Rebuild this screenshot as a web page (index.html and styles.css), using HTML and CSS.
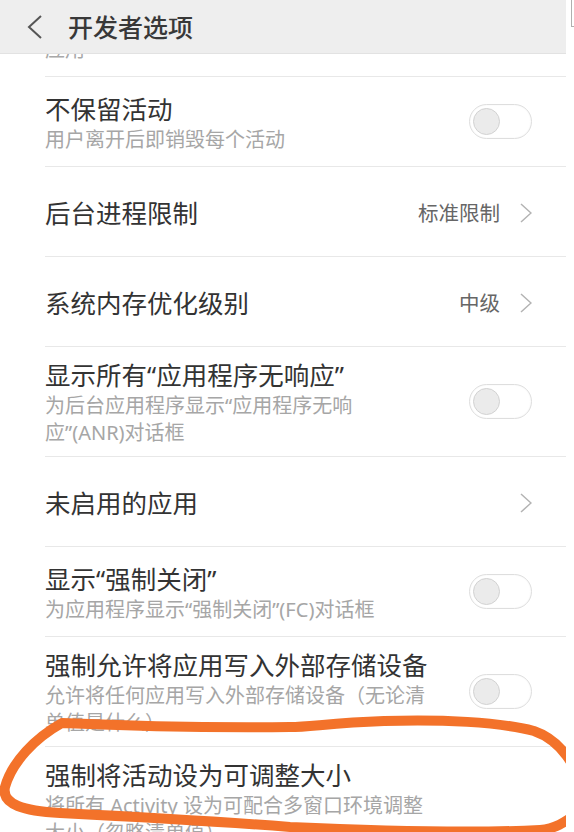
FILE: index.html
```html
<!DOCTYPE html>
<html lang="zh-CN">
<head>
<meta charset="utf-8">
<title>开发者选项</title>
<link rel="stylesheet" href="styles.css">
</head>
<body>
<div class="screen">
  <header class="topbar">
    <svg class="back" viewBox="0 0 16 24"><polyline points="14,1 2,12 14,23" fill="none" stroke="#555" stroke-width="2"/></svg>
    <span class="topbar-title">开发者选项</span>
  </header>
  <div class="edge-mark"></div>
  <div class="peek"><div class="peek-text">应用</div></div>
  <ul class="list">
    <li class="row">
      <div class="text"><div class="title">不保留活动</div><div class="sub">用户离开后即销毁每个活动</div></div>
      <span class="switch"><span class="knob"></span></span>
    </li>
    <li class="row">
      <div class="text"><div class="title">后台进程限制</div></div>
      <span class="value">标准限制</span>
      <svg class="chev" viewBox="0 0 12 20"><polyline points="1,1 11,10 1,19" fill="none" stroke="#b3b3b3" stroke-width="1.5"/></svg>
    </li>
    <li class="row">
      <div class="text"><div class="title">系统内存优化级别</div></div>
      <span class="value">中级</span>
      <svg class="chev" viewBox="0 0 12 20"><polyline points="1,1 11,10 1,19" fill="none" stroke="#b3b3b3" stroke-width="1.5"/></svg>
    </li>
    <li class="row">
      <div class="text"><div class="title">显示所有“应用程序无响应”</div><div class="sub">为后台应用程序显示“应用程序无响<br>应”(ANR)对话框</div></div>
      <span class="switch"><span class="knob"></span></span>
    </li>
    <li class="row">
      <div class="text"><div class="title">未启用的应用</div></div>
      <svg class="chev" viewBox="0 0 12 20"><polyline points="1,1 11,10 1,19" fill="none" stroke="#b3b3b3" stroke-width="1.5"/></svg>
    </li>
    <li class="row">
      <div class="text"><div class="title">显示“强制关闭”</div><div class="sub">为应用程序显示“强制关闭”(FC)对话框</div></div>
      <span class="switch"><span class="knob"></span></span>
    </li>
    <li class="row">
      <div class="text"><div class="title">强制允许将应用写入外部存储设备</div><div class="sub">允许将任何应用写入外部存储设备（无论清<br>单值是什么）</div></div>
      <span class="switch"><span class="knob"></span></span>
    </li>
    <li class="row">
      <div class="text"><div class="title">强制将活动设为可调整大小</div><div class="sub">将所有 Activity 设为可配合多窗口环境调整<br>大小（忽略清单值）</div></div>
    </li>
  </ul>
  <svg class="scribble" viewBox="0 0 566 832">
    <path d="M 585 800 C 578 765, 560 740, 534 731 C 500 722, 440 719, 384 721 C 330 723, 310 727, 290 727 C 200 728, 130 726, 62 723 C 35 738, 12 762, 5 787 C 1 805, 25 811, 60 813 C 120 816, 200 820, 290 827 C 380 831, 480 833, 540 830 C 555 829, 565 822, 575 815" fill="none" stroke="#f3722a" stroke-width="10" stroke-linecap="round" stroke-linejoin="round"/>
  </svg>
</div>
</body>
</html>
```

FILE: styles.css
```css
body {
  margin: 0;
  background: #ffffff;
  font-family: "Noto Sans", "Noto Sans CJK SC", "Liberation Sans", sans-serif;
}

.screen {
  position: relative;
  width: 574px;
  height: 832px;
  overflow: hidden;
  background: #ffffff;
}

.topbar {
  width: 566px;
  height: 54px;
  box-sizing: border-box;
  background: #eeeeee;
  border-bottom: 1px solid #e2e2e2;
  display: flex;
  align-items: center;
}

.back {
  margin-left: 27px;
  width: 16px;
  height: 24px;
  flex: none;
}

.topbar-title {
  margin-left: 25px;
  font-size: 25px;
  line-height: 30px;
  font-weight: 500;
  color: #383838;
}

.edge-mark {
  position: absolute;
  left: 571px;
  top: 0;
  width: 3px;
  height: 26px;
  border-left: 1px solid #b0b0b0;
  border-bottom: 1px solid #b0b0b0;
}

.peek {
  margin-left: 45px;
  width: 521px;
  height: 22px;
  overflow: hidden;
}

.peek-text {
  margin-top: -18px;
  font-size: 20px;
  line-height: 27px;
  color: #a8a8a8;
}

.list {
  margin: 0 0 0 45px;
  padding: 0;
  list-style: none;
  width: 521px;
}

.row {
  display: flex;
  align-items: center;
  box-sizing: border-box;
  min-height: 90px;
  padding: 13px 34px 10px 0;
  border-top: 1px solid #e8e8e8;
}

.text {
  flex: 1;
  min-width: 0;
}

.title {
  font-size: 25.5px;
  line-height: 30px;
  color: #333333;
  white-space: nowrap;
}

.sub {
  margin-top: 2px;
  font-size: 20px;
  line-height: 27px;
  color: #a6a6a6;
  white-space: nowrap;
}

.value {
  font-size: 20.5px;
  line-height: 30px;
  color: #666666;
  margin-right: 20px;
}

.chev {
  width: 12px;
  height: 20px;
  flex: none;
}

.switch {
  flex: none;
  position: relative;
  width: 63px;
  height: 35px;
  box-sizing: border-box;
  border: 1px solid #dedede;
  border-radius: 18px;
  background: #ffffff;
  margin-bottom: 4px;
  box-shadow: inset 0 0 2px rgba(0, 0, 0, 0.05);
}

.knob {
  position: absolute;
  left: 3px;
  top: 3px;
  width: 27px;
  height: 27px;
  box-sizing: border-box;
  border-radius: 50%;
  background: #ebebeb;
  border: 1px solid #d2d2d2;
}

.scribble {
  position: absolute;
  left: 0;
  top: 0;
  width: 566px;
  height: 832px;
  pointer-events: none;
}
```
